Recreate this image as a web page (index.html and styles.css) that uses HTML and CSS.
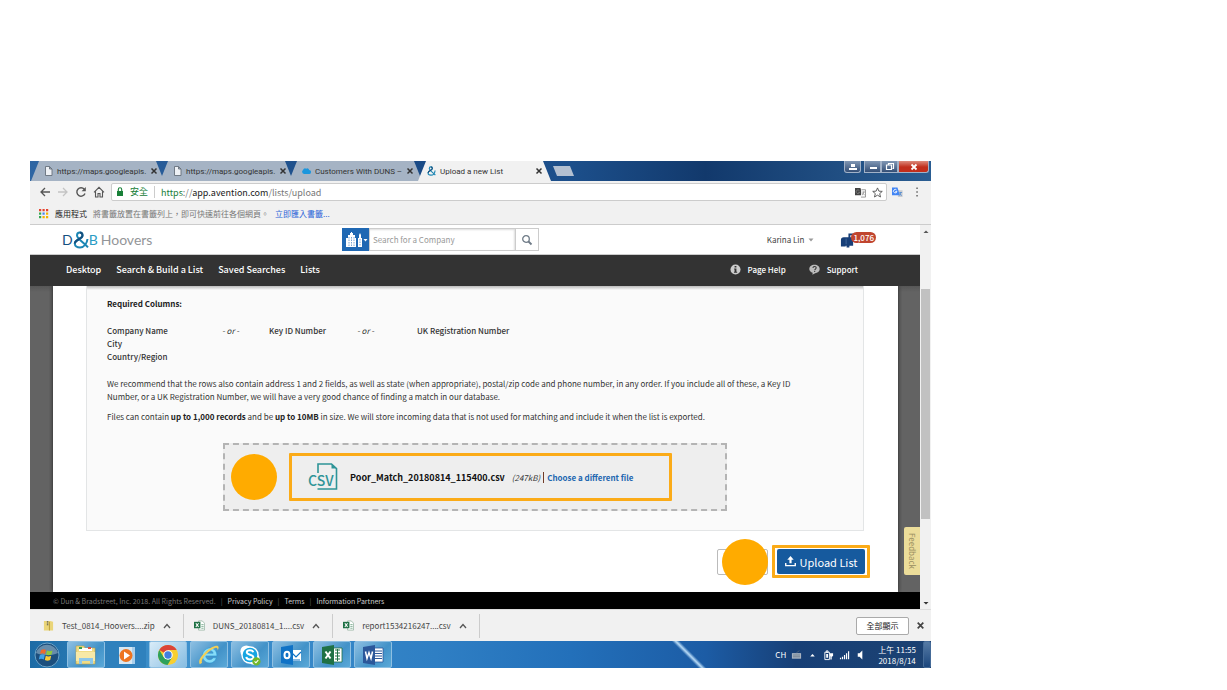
FILE: index.html
```html
<!DOCTYPE html>
<html lang="en">
<head>
<meta charset="utf-8">
<title>Upload a new List</title>
<link rel="stylesheet" href="styles.css">
</head>
<body>
<svg class="defs" width="0" height="0" aria-hidden="true">
  <symbol id="doc" viewBox="0 0 8 10"><path d="M1 .5h4l2.500 2.500v6.500h-6.500zM5 .5v2.500h2.500" fill="#eef1f5" stroke="#67707c" stroke-width=".9"/></symbol>
  <symbol id="x" viewBox="0 0 8 8"><path d="M1.500 1.500l5 5m0-5l-5 5" stroke="currentColor" stroke-width="1.500"/></symbol>
  <symbol id="chev" viewBox="0 0 8 6"><path d="M1 5l3-3.500 3 3.500" fill="none" stroke="#555" stroke-width="1.300"/></symbol>
  <symbol id="xls" viewBox="0 0 12 12"><path d="M5 1h4l2.500 2.500v7.500h-6.500z" fill="#fff" stroke="#7fa58f" stroke-width=".7"/><path d="M8 5h2.500m-2.500 2h2.500m-2.500 2h2.500" stroke="#5d9a76" stroke-width=".8"/><path d="M0 2h7v7h-7z" fill="#1f7145"/><path d="M2 3.500l3 4m0-4l-3 4" stroke="#fff" stroke-width="1.100"/></symbol>
  <symbol id="amp" viewBox="0 0 16 18"><path d="M14.500 8c-.5 4-3 8.500-7.500 8.500-3 0-5.200-1.600-5.200-4 0-4.500 7.700-4 7.700-8 0-1.700-1-3-2.700-3s-2.800 1.200-2.800 2.900c0 3 7 7.600 11 12" fill="none" stroke="#1c86b4" stroke-width="2"/><path d="M1.800 12.500c0-4.500 7.700-4 7.700-8 0-1.700-1-3-2.700-3" fill="none" stroke="#14507f" stroke-width="2"/></symbol>
</svg>
<div class="window">
  <header class="tabstrip">
    <div class="tab"><svg class="fav"><use href="#doc"/></svg><span>https://maps.googleapis.</span><button aria-label="Close tab"><svg><use href="#x"/></svg></button></div>
    <div class="tab"><svg class="fav"><use href="#doc"/></svg><span>https://maps.googleapis.</span><button aria-label="Close tab"><svg><use href="#x"/></svg></button></div>
    <div class="tab"><svg class="fav" viewBox="0 0 12 10"><path d="M3 9a3 3 0 0 1-1.500-5.500A2.500 2.500 0 0 1 5.500 2a2.500 2.500 0 0 1 4 1.500A2.600 2.600 0 0 1 9 9z" fill="#1b96dd"/></svg><span>Customers With DUNS –</span><button aria-label="Close tab"><svg><use href="#x"/></svg></button></div>
    <div class="tab active"><svg class="fav"><use href="#amp"/></svg><span>Upload a new List</span><button aria-label="Close tab"><svg><use href="#x"/></svg></button></div>
    <button class="newtab" aria-label="New tab"></button>
    <div class="caption">
      <button class="capuser" aria-label="User"><svg viewBox="0 0 14 10"><path d="M5 2h4v3h-4zM3 6h8v2h-8z" fill="#fff"/></svg></button>
      <button class="capmin" aria-label="Minimize"><svg viewBox="0 0 14 10"><path d="M4 5h7v2h-7z" fill="#fff"/></svg></button>
      <button class="capmax" aria-label="Restore"><svg viewBox="0 0 14 10"><path d="M5.500 2.500v-1h5v5h-1M3.500 3h5v4.500h-5z" fill="none" stroke="#fff" stroke-width="1.200"/></svg></button>
      <button class="capclose" aria-label="Close"><svg viewBox="0 0 14 10"><path d="M4.500 2.500l5 5m0-5l-5 5" stroke="#fff" stroke-width="1.800"/></svg></button>
    </div>
  </header>
  <div class="toolbar">
    <button aria-label="Back"><svg viewBox="0 0 12 12"><path d="M11 6h-9m4-4l-4 4 4 4" fill="none" stroke="#555" stroke-width="1.300"/></svg></button>
    <button aria-label="Forward"><svg viewBox="0 0 12 12"><path d="M1 6h9m-4-4l4 4-4 4" fill="none" stroke="#c4c4c4" stroke-width="1.300"/></svg></button>
    <button aria-label="Reload"><svg viewBox="0 0 12 12"><path d="M10 7.500A4.200 4.200 0 1 1 9.300 3.300" fill="none" stroke="#555" stroke-width="1.400"/><path d="M10.800 1v4.200h-4.200z" fill="#555"/></svg></button>
    <button aria-label="Home"><svg viewBox="0 0 12 12"><path d="M1 6.300l5-5 5 5M2.500 5.500v5.500h2.500v-3.500h2v3.500h2.500v-5.500" fill="none" stroke="#555" stroke-width="1.100"/></svg></button>
    <div class="omnibox">
      <svg class="lock" viewBox="0 0 8 10"><path d="M1 4h6v5h-6z" fill="#188038"/><path d="M2.300 4v-1.500a1.700 1.700 0 0 1 3.400 0v1.500" fill="none" stroke="#188038" stroke-width="1.100"/></svg>
      <span class="secure">安全</span>
      <span class="url"><span class="scheme">https</span>://<b>app.avention.com</b>/lists/upload</span>
      <svg class="i11" viewBox="0 0 12 12"><path d="M0 1h6l2 8h-8z" fill="#444"/><path d="M7 3h4.500v8h-5" fill="#fff" stroke="#777" stroke-width=".8"/><path d="M4.800 4a2 2 0 1 0 .3 1.800h-1.600M8 5.500h3M9.500 5l-1.500 4M8.500 6.500l2 2.500" fill="none" stroke="#888" stroke-width=".8"/></svg>
      <svg class="i11" viewBox="0 0 12 12"><path d="M6 1l1.500 3.500 3.700.3-2.800 2.400.9 3.700-3.300-2-3.300 2 .9-3.700-2.800-2.400 3.700-.3z" fill="none" stroke="#555"/></svg>
    </div>
    <svg class="i11" viewBox="0 0 12 12"><path d="M6 3.500h5.500v7.500h-5z" fill="#c9ccd1"/><path d="M0 .5h6l2.500 8.500h-8.500z" fill="#4285f4"/><path d="M5 3.300a1.900 1.900 0 1 0 .4 1.700h-1.800" fill="none" stroke="#fff"/><path d="M8 6h3M9.500 5.500l-1 4M8.500 7l2 2.500" stroke="#5b8fd0"/></svg>
    <button aria-label="Menu"><svg viewBox="0 0 12 12"><path d="M5.300 1.500h1.500v1.500h-1.500zM5.300 5.300h1.500v1.500h-1.500zM5.300 9h1.500v1.500h-1.500z" fill="#666"/></svg></button>
  </div>
  <div class="bookmarks">
    <svg class="i11" viewBox="0 0 11 11"><path d="M1 1h2.200v2.200h-2.200zM4.500 1h2.200v2.200h-2.200zM8 1h2.200v2.200h-2.200z" fill="#e5432f"/><path d="M1 4.500h2.200v2.200h-2.200z" fill="#35a853"/><path d="M4.500 4.500h2.200v2.200h-2.200z" fill="#4285f4"/><path d="M8 4.500h2.200v2.200h-2.200zM4.500 8h2.200v2.200h-2.200zM8 8h2.200v2.200h-2.200z" fill="#f4b400"/><path d="M1 8h2.200v2.200h-2.200z" fill="#35a853"/></svg>
    <b>應用程式</b><span>將書籤放置在書籤列上，即可快速前往各個網頁。</span><a href="#import">立即匯入書籤...</a>
  </div>
  <div class="viewport">
    <div class="page">
      <div class="brandbar">
        <a class="logo" href="#home"><span class="ld">D</span><svg><use href="#amp"/></svg><span class="lb">B</span><span class="lh">Hoovers</span></a>
        <form class="search">
          <button type="button" class="scope" aria-label="Companies"><svg viewBox="0 0 24 18"><path d="M2 16v-9h2v-3h2v-2h1v-1h1v1h1v2h2v3h1v9zM14 16v-9h1v-3l1-2 1 2v3h1v9z" fill="#fff"/><path d="M5 6v9M7.500 6v9M10 6v9M16 8v7" stroke="#1f68b3" stroke-width=".6" stroke-dasharray="1.500 1"/><path d="M19.500 8h4l-2 2.500z" fill="#fff"/></svg></button>
          <input type="text" aria-label="Search for a Company" placeholder="Search for a Company">
          <button type="button" class="go" aria-label="Search"><svg viewBox="0 0 12 12"><circle cx="5" cy="5" r="3.300" fill="none" stroke="#6f7b87" stroke-width="1.300"/><path d="M7.500 7.500l3 3" stroke="#6f7b87" stroke-width="1.800"/></svg></button>
        </form>
        <div class="account"><button class="user">Karina Lin <svg viewBox="0 0 6 4"><path d="M.5 .5h5l-2.500 3z" fill="#999"/></svg></button>
          <div class="mail"><svg viewBox="0 0 16 16"><path d="M1 15v-7a3 3 0 0 1 3-3h5v-4h5v2h-3v2h3v9h-4v2h-3v-2h-1v1z" fill="#173f78"/><path d="M6.500 6.500v6" stroke="#5f81b2" stroke-width=".6"/></svg><span class="badge">1,076</span></div>
        </div>
      </div>
      <nav class="nav">
        <a href="#desktop">Desktop</a><a href="#build">Search &amp; Build a List</a><a href="#saved">Saved Searches</a><a href="#lists">Lists</a>
        <div class="help">
          <a href="#help"><svg viewBox="0 0 12 12"><circle cx="6" cy="6" r="5.500" fill="#ccc"/><path d="M5 2.200h2v1.600h-2zM4.500 5h2.500v3.500h.8v1h-3.500v-1h.7v-2.500h-.5z" fill="#333"/></svg>Page Help</a>
          <a href="#support"><svg viewBox="0 0 12 12"><path d="M6 .8c3.300 0 5.700 2 5.700 4.700s-2.500 4.500-5 4.600l-3 1.700.3-2.200c-2.200-.6-3.700-2.200-3.700-4.100 0-2.700 2.400-4.700 5.700-4.700z" fill="#bbb"/><path d="M4.300 4.300c0-1 .8-1.600 1.800-1.600s1.800.6 1.800 1.500c0 1.300-1.700 1.300-1.700 2.600m0 .8v1.200" fill="none" stroke="#333" stroke-width="1.100"/></svg>Support</a>
        </div>
      </nav>
      <main class="canvas">
        <div class="card">
          <section class="panel">
            <h2>Required Columns:</h2>
            <table class="cols">
              <tr><th>Company Name<br>City<br>Country/Region</th><td>- or -</td><th>Key ID Number</th><td>- or -</td><th>UK Registration Number</th></tr>
            </table>
            <p>We recommend that the rows also contain address 1 and 2 fields, as well as state (when appropriate), postal/zip code and phone number, in any order. If you include all of these, a Key ID Number, or a UK Registration Number, we will have a very good chance of finding a match in our database.</p>
            <p>Files can contain <b>up to 1,000 records</b> and be <b>up to 10MB</b> in size. We will store incoming data that is not used for matching and include it when the list is exported.</p>
            <div class="drop">
              <span class="dot"></span>
              <div class="file">
                <svg viewBox="0 0 30 28" role="img" aria-label="CSV"><path d="M10 10v-9h13.500l5 4.500v20.500h-19" fill="none" stroke="#2e9497" stroke-width="1.600"/><path d="M23.500 1v4.500h5z" fill="#2e9497"/><text x="0" y="23" class="csv">CSV</text></svg>
                <b>Poor_Match_20180814_115400.csv</b><i>(247kB)</i><span class="bar"></span><a href="#choose">Choose a different file</a>
              </div>
            </div>
          </section>
          <div class="actions">
            <button class="cancel" aria-label="Cancel"></button><span class="dot over"></span>
            <div class="ring"><button class="upload"><svg viewBox="0 0 12 12"><path d="M6 0l3.500 4h-2.300v4h-2.400v-4h-2.300z" fill="#fff"/><path d="M.8 7.500v3h10.400v-3" fill="none" stroke="#fff" stroke-width="1.500"/></svg>Upload List</button></div>
          </div>
        </div>
        <button class="feedback">Feedback</button>
      </main>
      <footer class="legal"><span>© Dun &amp; Bradstreet, Inc. 2018. All Rights Reserved.</span><a href="#privacy">Privacy Policy</a><a href="#terms">Terms</a><a href="#partners">Information Partners</a></footer>
    </div>
    <div class="scroll"><svg viewBox="0 0 8 5"><path d="M1.500 4h5l-2.500-2.500z" fill="#555"/></svg><span class="thumb"></span><svg viewBox="0 0 8 5"><path d="M1.500 1h5l-2.500 2.500z" fill="#333"/></svg></div>
  </div>
  <div class="downloads">
    <button class="dl first"><svg class="i11" viewBox="0 0 12 12"><path d="M1 1h7l3 1v9.500h-10z" fill="#ead579"/><path d="M7 2v9.500" stroke="#b79a33"/><path d="M5 1v5" stroke="#555" stroke-width="1.600" stroke-dasharray="1 .6"/></svg><span>Test_0814_Hoovers....zip</span><svg class="chev"><use href="#chev"/></svg></button>
    <button class="dl"><svg class="i11"><use href="#xls"/></svg><span>DUNS_20180814_1....csv</span><svg class="chev"><use href="#chev"/></svg></button>
    <button class="dl"><svg class="i11"><use href="#xls"/></svg><span>report1534216247....csv</span><svg class="chev"><use href="#chev"/></svg></button>
    <button class="showall">全部顯示</button>
    <button class="closebar" aria-label="Close"><svg><use href="#x"/></svg></button>
  </div>
  <div class="taskbar">
    <button class="start" aria-label="Start"><svg viewBox="0 0 26 26"><circle cx="13" cy="13" r="12" fill="#1c4f7e" stroke="#6ba3c7"/><path d="M2 11a11.500 11.500 0 0 1 22 0c-7 3-15 3-22 0z" fill="#668cab"/><path d="M7 8c2-1 3.500-1 5 0l-1 4c-2-1-3.500-1-5 0z" fill="#ee6a2c"/><path d="M13 8.500c2 1 3.500 1 5.500 0l-1 4c-2 1-3.500 1-5.500 0z" fill="#8fc83e"/><path d="M5.800 13.200c1.500-1 3.200-1 5 0l-1 4.300c-2-1-3.500-1-5 0z" fill="#3fa2e8"/><path d="M11.800 13.700c1.700 1 3.500 1 5.400 0l-1 4.300c-2 1-3.500 1-5.400 0z" fill="#fbcb36"/></svg></button>
    <button aria-label="Explorer"><svg viewBox="0 0 24 22"><path d="M2 2h8l1 2h10v16h-19z" fill="#f0dc86" stroke="#b99f48" stroke-width=".6"/><path d="M5 4h13v3h-13z" fill="#fff"/><path d="M5 4h3" stroke="#39a04c" stroke-width="2"/><path d="M14 4h3" stroke="#df5240" stroke-width="2"/><path d="M2 8h19v9h-19z" fill="#f7e9a7"/><path d="M5 20v-6h14v6h-3v-3h-8v3z" fill="#8dc7ea"/></svg></button>
    <button class="flat" aria-label="Media Player"><svg viewBox="0 0 24 22"><path d="M6 3h14v17h-14z" fill="#a9cfeb"/><path d="M4 3h13v17h-13z" fill="#d6e7f3"/><circle cx="11" cy="11.500" r="6.500" fill="#ee7420"/><path d="M9 7.500l6 4-6 4z" fill="#fff"/></svg></button>
    <button class="lit" aria-label="Chrome"><svg viewBox="0 0 24 24"><circle cx="12" cy="12" r="11" fill="#f8cf2f"/><path d="M12 12L2.500 6.500A11 11 0 0 1 21.500 6.500H12z" fill="#db4437"/><path d="M2.500 6.500A11 11 0 0 0 11.500 23l5-8.500H7.300z" fill="#2da15c"/><circle cx="12" cy="12" r="5.200" fill="#fff"/><circle cx="12" cy="12" r="4" fill="#427fe0"/></svg></button>
    <button aria-label="Internet Explorer"><svg viewBox="0 0 24 24"><path d="M20 15h-3.500c-2 3.500-8 2.500-8-2h12c1-10-13-12-15.500-2-2 10 12 14 15 4zM16.500 10h-8c1-4 7-4 8 0z" fill="#86dcf8" stroke="#2793d2" stroke-width=".6"/><path d="M2 22c-4-5 10-19 18-20 3 0 3 2 1.500 5 0-3-1-3.500-3.500-2.500C11 7.500 2 17 4.500 20.500z" fill="#f4cf55"/></svg></button>
    <button aria-label="Skype"><svg viewBox="0 0 24 24"><circle cx="8" cy="8" r="6.500" fill="#fff"/><circle cx="16" cy="16" r="6.500" fill="#fff"/><circle cx="12" cy="12" r="9.500" fill="#fff"/><circle cx="12" cy="12" r="8" fill="#16a5e2"/><path d="M15.500 9c-.5-3-7-3-7 0 0 3.500 7.200 2 7.200 5.500 0 3.300-7.500 3-7.700-.5" fill="none" stroke="#fff" stroke-width="2.200"/><circle cx="19" cy="19" r="4.500" fill="#72b72a"/><path d="M17 19l1.500 1.500 2.500-3" fill="none" stroke="#fff" stroke-width="1.200"/></svg></button>
    <button aria-label="Outlook"><svg viewBox="0 0 24 22"><path d="M12 6h10v11h-10z" fill="#fff"/><path d="M12 8l5 5 5-5M13 16h8" fill="none" stroke="#0f72c6" stroke-width="1.200"/><path d="M2 3l12-2v20l-12-2z" fill="#0f72c6"/><ellipse cx="8" cy="11" rx="2.500" ry="3.300" fill="none" stroke="#fff" stroke-width="2"/></svg></button>
    <button aria-label="Excel"><svg viewBox="0 0 24 22"><path d="M13 4h9v14h-9z" fill="#fff" stroke="#1f7145" stroke-width=".8"/><path d="M15 6h5m-5 3h5m-5 3h5m-5 3h5M17.500 5v12" stroke="#1f7145"/><path d="M2 3l12-2v20l-12-2z" fill="#1f7145"/><path d="M5.500 7.500l5 7m0-7l-5 7" stroke="#fff" stroke-width="2"/></svg></button>
    <button aria-label="Word"><svg viewBox="0 0 24 22"><path d="M13 4h9v14h-9z" fill="#fff" stroke="#2b579a" stroke-width=".8"/><path d="M14 7h7m-7 2.500h7m-7 2.500h7m-7 2.500h7" stroke="#2b579a"/><path d="M2 3l12-2v20l-12-2z" fill="#2b579a"/><path d="M4.500 7.500l1.500 7 2-6 2 6 1.500-7" fill="none" stroke="#fff" stroke-width="1.500"/></svg></button>
    <div class="tray">
      <span>CH</span>
      <svg viewBox="0 0 12 12"><path d="M1 4h10v6h-10z" fill="#aeb8c4"/><path d="M2 6h8M2 8h8M6 4c0-2 3-1 3-3" fill="none" stroke="#55657a" stroke-width=".8"/></svg>
      <svg viewBox="0 0 12 12"><path d="M3.500 7.500h5l-2.500-2.500z" fill="#fff"/></svg>
      <svg viewBox="0 0 12 12"><path d="M2 3h5v8h-5zM3.500 1.500h2v1.500h-2z" fill="none" stroke="#fff"/><path d="M7 4h4v3l-1.500 1v3h-1.500v-3zM3.500 5h2v4h-2z" fill="#fff"/></svg>
      <svg viewBox="0 0 12 12"><path d="M1 9h1.300v1.500h-1.300zM3.200 8h1.300v2.500h-1.300zM5.400 6h1.300v4.500h-1.300zM7.600 4h1.300v6.500h-1.300zM9.800 2h1.300v8.500h-1.300z" fill="#fff"/></svg>
      <svg viewBox="0 0 12 12"><path d="M3 4h2l3-3v10l-3-3h-2z" fill="#fff"/></svg>
      <time>上午 11:55<br>2018/8/14</time>
    </div>
    <button class="peek" aria-label="Show desktop"></button>
  </div>
</div>
</body>
</html>
```
FILE: styles.css
```css
* { box-sizing: border-box; }
body { margin: 0; background: #fff; font-family: "Noto Sans CJK TC", sans-serif; font-size: 8px; color: #444; }
button { padding: 0; border: 0; background: none; font: inherit; color: inherit; display: flex; align-items: center; justify-content: center; }
a { color: inherit; text-decoration: none; }
.defs { position: absolute; }
.window { margin: 161px 296px 22px 30px; background: #f1f1f1; }

.tabstrip { display: flex; align-items: flex-start; height: 20px; padding-left: 1px; background: linear-gradient(90deg, #2f66a3, #1a4a85 40%, #1c4f8b 60%, #12396c 75%, #2a5d92); }
.tab { display: flex; align-items: center; gap: 4px; flex: 0 1 133px; min-width: 0; height: 20px; margin-right: -4px; padding: 0 8px 0 13px; background: #a5b3c4; clip-path: polygon(8px 0, calc(100% - 8px) 0, 100% 100%, 0 100%); color: #333; font-family: Roboto, sans-serif; }
.tab span { flex: 1; white-space: nowrap; }
.tab.active { background: #f1f1f1; padding-left: 9px; }
.fav { width: 9px; height: 10px; flex: none; }
.tab button svg { width: 8px; height: 8px; }
.newtab { width: 21px; height: 10px; margin: 5px 0 0 6px; background: #b3c0d1; clip-path: polygon(0 0, 17px 0, 100% 100%, 4px 100%); }
.caption { display: flex; margin: 0 2px 0 auto; }
.caption button { width: 17px; height: 12px; background: linear-gradient(#8197b4, #344f76); border: 1px solid #a2b2c8; border-top: 0; }
.caption svg { width: 14px; height: 10px; }
.caption .capuser { margin-right: 3px; border-radius: 0 0 3px 3px; }
.caption .capclose { width: 31px; background: linear-gradient(#dc8b7c, #c12e1c 55%); border-radius: 0 0 3px 0; }

.toolbar { display: flex; align-items: center; gap: 5px; height: 22px; padding: 0 8px 0 8px; }
.toolbar > button { width: 13px; }
.toolbar > .i11 { margin-right: 2px; }
.toolbar button svg { width: 12px; height: 12px; }
.i11 { width: 11px; height: 11px; flex: none; }
.omnibox { display: flex; align-items: center; flex: 1; gap: 6px; height: 18px; margin-left: 1px; padding: 0 3px 0 4px; background: #fff; border: 1px solid #ccc; border-radius: 2px; font-size: 9px; }
.lock { width: 8px; height: 10px; }
.secure { color: #188038; padding-right: 6px; border-right: 1px solid #ccc; line-height: 12px; }
.scheme { color: #188038; }
.url { flex: 1; color: #777; }
.url b { font-weight: 400; color: #222; }

.bookmarks { display: flex; align-items: center; gap: 6px; height: 22px; padding-left: 8px; border-bottom: 1px solid #ccc; }
.bookmarks b { font-weight: 400; color: #222; }
.bookmarks span { color: #777; }
.bookmarks a { color: #2a62d8; }

.viewport { display: flex; }
.page { flex: 1; min-width: 0; }
.brandbar { display: grid; grid-template-columns: 280px 197px 1fr; align-items: center; height: 30px; padding: 0 44px 0 32px; background: #fff; border-bottom: 1px solid #ccc; }
.logo { display: flex; align-items: center; font-family: Lato, sans-serif; font-size: 14px; }
.logo svg { width: 16px; height: 18px; }
.ld { color: #14507f; }
.lb { color: #2a9bc4; }
.lh { margin-left: 3px; color: #939598; }
.search { display: flex; height: 23px; }
.scope { width: 27px; background: #1f68b3; }
.scope svg { width: 24px; height: 18px; }
.search input { flex: 1; min-width: 0; padding: 0 3px; border: 1px solid #ccc; border-radius: 0; font: inherit; box-shadow: inset -1px 1px 2px #ddd; }
.search input::placeholder { color: #999; opacity: 1; }
.go { width: 23px; border: 1px solid #ccc; border-left: 0; }
.go svg { width: 12px; height: 12px; }
.account { display: flex; justify-content: flex-end; align-items: center; gap: 26px; }
.user { gap: 4px; }
.user svg { width: 6px; height: 4px; }
.mail { display: flex; align-items: center; }
.mail svg { width: 15px; height: 16px; }
.badge { margin: 0 0 5px -4px; padding: 0 2px; line-height: 11px; border-radius: 6px; background: #c0452f; color: #fff; font-size: 8px; font-weight: 500; }

.nav { display: flex; align-items: center; gap: 15px; height: 31px; padding: 0 62px 2px 36px; background: #333; color: #fff; font-size: 9px; font-weight: 500; }
.help { display: flex; gap: 23px; margin-left: auto; font-size: 8px; }
.help a { display: flex; align-items: center; gap: 7px; }
.help svg { width: 11px; height: 11px; }

.canvas { position: relative; padding: 0 22px 0 23px; background: linear-gradient(#4446, #4440 6px), #636363; }
.card { background: #fff; box-shadow: 0 0 4px #222; clip-path: inset(0 -4px); }
.panel { margin: 0 34px 0 33px; padding: 11px 20px 19px; background: linear-gradient(#bbb, #fafafa 4px); border: 1px solid #e3e5e6; border-top: 0; color: #333; line-height: 13px; }
.panel h2 { margin: 0 0 14px; font-size: 8px; line-height: 13px; color: #222; }
.cols { border-collapse: collapse; margin-bottom: 14px; }
.cols th, .cols td { padding: 0; text-align: left; vertical-align: top; }
.cols th { font-weight: 500; width: 115px; }
.cols td { width: 47px; font-style: italic; }
.cols th:nth-child(3) { width: 88px; }
.cols td:nth-child(4) { width: 60px; }
.panel p { margin: 0 0 7px; padding-right: 30px; }
.panel p b { color: #222; }
.drop { display: flex; align-items: center; gap: 12px; margin: 20px 116px 0; padding: 8px 53px 8px 6px; border: 2px dashed #b4b4b4; background: #eee; }
.dot { flex: none; width: 46px; height: 46px; border-radius: 50%; background: #ffab00; }
.file { display: flex; align-items: center; flex: 1; height: 48px; padding-left: 16px; border: 3px solid #fbab18; border-radius: 1px; white-space: nowrap; }
.file svg { width: 30px; height: 28px; margin-right: 12px; overflow: visible; }
.csv { font: 500 14px "Noto Sans CJK TC", sans-serif; fill: #2e9497; stroke: #eee; stroke-width: 1px; paint-order: stroke; }
.file b { font-size: 9px; color: #111; }
.file i { margin-left: 7px; }
.bar { width: 1px; height: 11px; margin: 0 3px; background: #713c28; }
.file a { color: #2266b0; font-weight: 700; }
.actions { display: flex; align-items: center; justify-content: flex-end; height: 61px; padding: 0 28px 0 0; }
.cancel { width: 51px; height: 26px; border: 1px solid #bbb; border-radius: 2px; }
.over { position: relative; margin-left: -46px; }
.ring { margin-left: 4px; padding: 1px 2px; border: 3px solid #fbab18; border-radius: 1px; }
.upload { width: 88px; height: 25px; gap: 4px; border-radius: 2px; background: #165a9e; color: #fff; font-size: 11px; }
.upload svg { width: 11px; height: 11px; }
.feedback { position: absolute; right: 0; bottom: 17px; width: 16px; height: 48px; writing-mode: vertical-rl; background: #ecdd9a; border-radius: 2px 0 0 2px; color: #998d60; font-size: 8px; }
.legal { display: flex; align-items: center; height: 17px; padding-left: 23px; background: #000; color: #777; font-size: 7px; }
.legal a { color: #ccc; }
.legal a::before { content: "|"; color: #666; margin: 0 5px; }
.scroll { display: flex; flex-direction: column; align-items: center; width: 11px; padding: 4px 0 3px; background: #f1f1f1; }
.scroll svg { width: 8px; height: 5px; }
.thumb { width: 9px; height: 230px; margin: 55px 0 auto; background: #c1c1c1; }

.downloads { display: flex; align-items: center; height: 32px; padding-right: 6px; border-top: 1px solid #ddd; }
.dl { height: 24px; gap: 8px; padding: 0 12px 0 10px; border-right: 1px solid #ccc; }
.dl.first { padding-left: 13px; }
.chev { width: 8px; height: 6px; }
.showall { width: 53px; height: 18px; margin-left: auto; border: 1px solid #aaa; border-radius: 2px; background: #fff; color: #222; }
.closebar { margin-left: 7px; }
.closebar svg { width: 9px; height: 9px; }

.taskbar { display: flex; gap: 3px; height: 27px; background: linear-gradient(45deg, #fff0 44%, #b9dcf7 50%, #fff0 56%) 639px 0 / 40px 100% no-repeat, linear-gradient(90deg, #1c6ba5, #3f92cd 15%, #2f7fc4 45%, #2370ba 60%, #1c5ca5 75%, #173f76 85%, #1c4272); color: #fff; }
.taskbar > button { width: 38px; border: 1px solid #8fc0e2; background: linear-gradient(135deg, #8dbfe2, #4292c8 60%, #5ba9d8); border-radius: 2px; }
.taskbar > button svg { width: 24px; height: 22px; }
.taskbar > .start { width: 34px; border: 0; background: none; }
.taskbar > .start svg { width: 26px; height: 26px; }
.taskbar > .flat { background: #2f81bd; border-color: #2f81bd; }
.taskbar > .lit { background: linear-gradient(135deg, #d9ecf8, #87bde2); }
.tray { display: flex; align-items: center; gap: 5px; margin-left: auto; }
.tray svg { width: 11px; height: 12px; }
.tray time { margin: 0 4px 0 7px; text-align: center; line-height: 11px; }
.taskbar > .peek { width: 8px; background: linear-gradient(#567ba5, #1b467d); border-color: #456b98; }
```
